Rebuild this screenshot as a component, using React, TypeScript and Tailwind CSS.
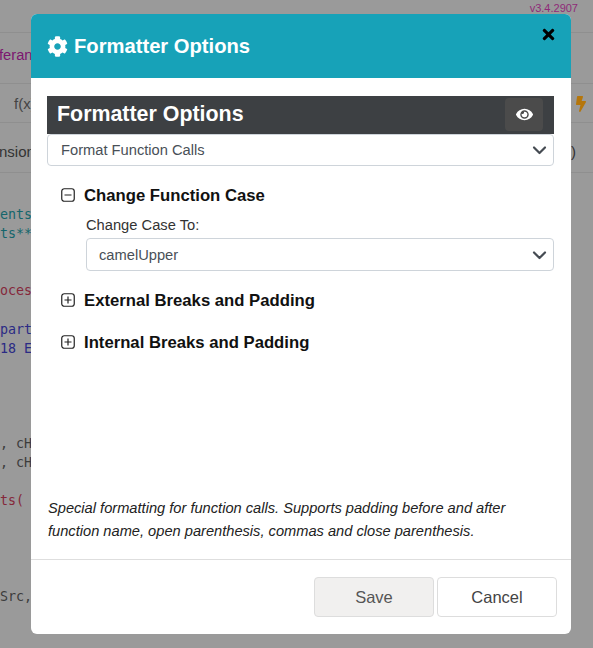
import { FaBolt, FaCog, FaEye, FaTimes } from "react-icons/fa";

// code lines peeking out left of the dialog
const CODE_LINES: { text: string; color: string }[] = [
  { text: "ents", color: "text-[#14666c]" },
  { text: "ts**", color: "text-[#14666c]" },
  { text: "", color: "" },
  { text: "", color: "" },
  { text: "oces", color: "text-[#85283a]" },
  { text: "", color: "" },
  { text: "part", color: "text-[#2b2b85]" },
  { text: "18 E", color: "text-[#2b2b85]" },
  { text: "", color: "" },
  { text: "", color: "" },
  { text: "", color: "" },
  { text: "", color: "" },
  { text: ", cH", color: "text-[#3c3c3c]" },
  { text: ", cH", color: "text-[#3c3c3c]" },
  { text: "", color: "" },
  { text: "ts(", color: "text-[#85283a]" },
  { text: "", color: "" },
  { text: "", color: "" },
  { text: "", color: "" },
  { text: "", color: "" },
  { text: "Src,", color: "text-[#3c3c3c]" },
];

function Chevron() {
  return (
    <svg width="15" height="10" viewBox="0 0 15 10" className="shrink-0">
      <path d="M2 2.5l5.5 5.5 5.5-5.5" fill="none" stroke="#454b52" strokeWidth="2.2" strokeLinecap="round" strokeLinejoin="round" />
    </svg>
  );
}

function SelectBox({ value, className }: { value: string; className: string }) {
  return (
    <div className={`flex items-center justify-between rounded border border-[#ced4da] bg-white pr-[6px] text-[14.7px] text-[#495057] ${className}`}>
      <span>{value}</span>
      <Chevron />
    </div>
  );
}

function TreeToggle({ open }: { open: boolean }) {
  return (
    <svg width="14" height="14" viewBox="0 0 14 14" className="shrink-0">
      <rect x="0.75" y="0.75" width="12.5" height="12.5" rx="2.5" fill="none" stroke="#222" strokeWidth="1.2" />
      <path d={open ? "M3.5 7h7" : "M3.5 7h7M7 3.5v7"} stroke="#222" strokeWidth="1.2" />
    </svg>
  );
}

function Section({ title, open }: { title: string; open: boolean }) {
  return (
    <div className="flex h-[24px] items-center gap-[9px] pl-[14px]">
      <TreeToggle open={open} />
      <span className="relative top-[1px] text-[16.7px] font-bold text-[#111]">{title}</span>
    </div>
  );
}

function Backdrop() {
  return (
    <div className="h-[648px] w-[593px] overflow-hidden bg-[#9a9a9a] font-['Liberation_Sans',sans-serif]">
      <div className="flex h-[33px] justify-end border-b border-[#8f8f8f] pr-[15px] text-[11px] leading-[16px] text-[#8f2a78]">
        v3.4.2907
      </div>
      <div className="flex h-[51px] items-center border-b border-[#8f8f8f] pb-[5px] text-[14.7px] text-[#7c1670]">
        <span className="-ml-[1px]">feran</span>
      </div>
      <div className="flex h-[39px] items-center justify-between border-b border-[#8f8f8f] pl-[14px] pr-[4px] pt-[2px] text-[15px] text-[#444]">
        <span>f(x)</span>
        <FaBolt className="text-[16px] text-[#b5760b]" />
      </div>
      <div className="flex h-[50px] items-center justify-between border-b border-[#8f8f8f] pr-[17px] pt-[9px] text-[15px] text-[#333]">
        <span className="-ml-[1px]">nsion</span>
        <span>)</span>
      </div>
      <div className="pt-[32px] font-['DejaVu_Sans_Mono',monospace] text-[13.33px] leading-[19.1px]">
        {CODE_LINES.map((line, i) => (
          <div key={i} className={`h-[19.1px] ${line.color}`}>
            {line.text}
          </div>
        ))}
      </div>
    </div>
  );
}

export default function App() {
  return (
    <div className="relative h-[648px] w-[593px] overflow-hidden">
      <Backdrop />
      <div className="absolute left-[31px] top-[14px] flex h-[620px] w-[540px] flex-col overflow-hidden rounded-[6px] bg-white font-['Liberation_Sans',sans-serif]">
        <div className="flex h-[64px] shrink-0 items-start justify-between bg-[#17a2b8] pl-[16px] pr-[14px]">
          <div className="mt-[19px] flex items-center gap-[6px] text-white">
            <FaCog className="text-[21px]" />
            <span className="text-[20.2px] font-bold leading-[26px]">Formatter Options</span>
          </div>
          <FaTimes className="mt-[12px] text-[17px] text-black" />
        </div>

        <div className="flex flex-1 flex-col px-[16px] pt-[18px]">
          <div className="mr-[1px] flex h-[38px] items-center justify-between bg-[#3d4043] pl-[10px] pr-[11px]">
            <span className="relative -top-[1px] text-[21.4px] font-bold text-white">Formatter Options</span>
            <div className="relative -top-[1px] flex h-[33px] w-[38px] items-center justify-center rounded bg-[#4b4b4b] text-[17px] text-white">
              <FaEye />
            </div>
          </div>
          <SelectBox value="Format Function Calls" className="mr-[1px] h-[32px] pl-[13px]" />

          <div className="mt-[17px]">
            <Section title="Change Function Case" open />
            <div className="ml-[39px] mr-[1px] mt-[8px]">
              <div className="text-[14.7px] leading-[20px] text-[#333]">Change Case To:</div>
              <SelectBox value="camelUpper" className="mt-[3px] h-[33px] pl-[12px] pt-[1px]" />
            </div>
            <div className="mt-[17px]">
              <Section title="External Breaks and Padding" open={false} />
            </div>
            <div className="mt-[18px]">
              <Section title="Internal Breaks and Padding" open={false} />
            </div>
          </div>

          <p className="mt-auto pb-[16px] pl-[1px] text-[14.65px] italic leading-[23px] text-[#222]">
            Special formatting for function calls. Supports padding before and after
            <br />
            function name, open parenthesis, commas and close parenthesis.
          </p>
        </div>

        <div className="flex h-[75px] shrink-0 items-start justify-end gap-[3px] border-t border-[#dedede] pr-[14px] pt-[17px] text-[16.5px]">
          <button className="h-[40px] w-[120px] rounded border border-[#dddddd] bg-[#f1f0ef] pt-[1px] text-[#555]">Save</button>
          <button className="h-[40px] w-[120px] rounded border border-[#dddddd] bg-white pt-[1px] text-[#444]">Cancel</button>
        </div>
      </div>
    </div>
  );
}
